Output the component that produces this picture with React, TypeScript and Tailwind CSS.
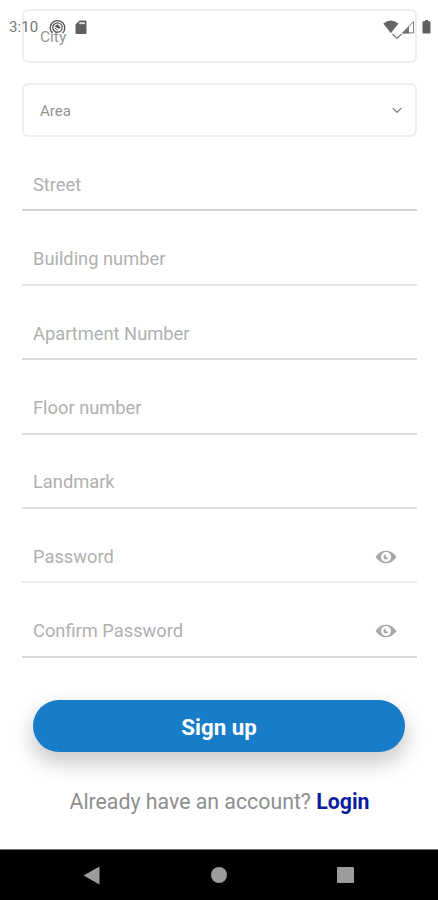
import React from 'react';

interface Field {
  label: string;
  line: string;
  secret?: boolean;
}

const fields: Field[] = [
  { label: 'Street', line: 'border-[#d3d3d3]' },
  { label: 'Building number', line: 'border-[#e4e4e4]' },
  { label: 'Apartment Number', line: 'border-[#dadada]' },
  { label: 'Floor number', line: 'border-[#dedede]' },
  { label: 'Landmark', line: 'border-[#e0e0e0]' },
  { label: 'Password', line: 'border-[#ebebeb]', secret: true },
  { label: 'Confirm Password', line: 'border-[#d8d8d8]', secret: true },
];

const EyeIcon = () => (
  <svg className="w-[22px] h-[14px]" viewBox="0 0 22 14">
    <path d="M0.5 7C3.5 2.6 7 .7 11 .7S18.500 2.600 21.500 7C18.500 11.400 15 13.300 11 13.300S3.500 11.400 .5 7Z" fill="#a8a8a8" />
    <circle cx="11" cy="7" r="5" fill="#fff" />
    <path d="M10.500 4.600A2.500 2.500 0 1 0 13.300 7.800L11 7.300Z" fill="#a8a8a8" />
  </svg>
);

const StatusBar = () => (
  <div className="absolute inset-x-0 top-0 h-[54px] flex items-center pl-[9px] pr-[7px]">
    <span className="text-[15px] leading-none text-[#757575] w-[40px] tracking-[0.1px]">3:10</span>
    <svg className="w-[17px] h-[17px] shrink-0" viewBox="0 0 17 17" fill="none" stroke="#555">
      <path d="M3.500 14.200A7.300 7.300 0 1 1 13.500 14.200" strokeWidth="1.300" />
      <circle cx="8.500" cy="8.500" r="4.700" strokeWidth="1.300" />
      <path d="M5.500 7.200 8.500 5.200 11.800 8.800 9.800 9.800Z" fill="#555" stroke="none" />
      <path d="M5.800 8.800 8.500 11.200" strokeWidth="1" />
    </svg>
    <svg className="w-3 h-[15px] ml-[9px] shrink-0" viewBox="0 0 12 15">
      <path d="M4.500 .5H10.500Q11.500 .5 11.500 1.500V13Q11.500 14 10.500 14H1.500Q.5 14 .5 13V4.500Z" fill="#5f5f5f" />
      <path d="M4.200 3.200H10" stroke="#d8d8d8" strokeWidth="2" />
    </svg>
    <div className="flex-1" />
    <svg className="w-4 h-[14px] shrink-0" viewBox="0 0 16 14">
      <path d="M.3 3.600Q7.800-2.400 15.500 3.600L7.900 13.300Z" fill="#666" />
    </svg>
    <svg className="w-[14px] h-[14px] ml-[2px] shrink-0" viewBox="0 0 14 14">
      <path d="M1.600 12.900 12.600 1.600V12.900Z" fill="none" stroke="#777" />
      <path d="M1 13.400 8 6.200V13.400Z" fill="#707070" />
    </svg>
    <svg className="w-[9px] h-[14px] ml-[7px] shrink-0" viewBox="0 0 9 14">
      <path d="M3 0H6V1.300H7.500Q8.500 1.300 8.500 2.300V12.500Q8.500 13.500 7.500 13.500H1.500Q.5 13.500 .5 12.500V2.300Q.5 1.300 1.500 1.300H3Z" fill="#5f5f5f" />
    </svg>
  </div>
);

const SelectBox = ({ children }: { children: React.ReactNode }) => (
  <div className="h-[54px] shrink-0 border-2 border-[#efefef] rounded-[6px] flex items-center justify-between pl-4 pr-3">
    {children}
  </div>
);

const App: React.FC = () => {
  return (
    <div className="relative w-[438px] h-[900px] bg-white overflow-hidden flex flex-col font-['Roboto',sans-serif]">
      <main className="flex-1 flex flex-col pl-[22px] pr-[21px] pt-[9px]">
        <div className="flex flex-col gap-5">
          <SelectBox>
            <span className="pt-[3px] text-[15.500px] leading-none text-[#949494]">City</span>
            <svg className="w-[12px] h-[8px]" viewBox="0 0 12 8" fill="none" stroke="#777" strokeWidth="1.200">
              <path d="M1.500 2 6 6.500 10.500 2" />
            </svg>
          </SelectBox>
          <SelectBox>
            <span className="pt-[2px] text-[15px] leading-none text-[#949494]">Area</span>
            <svg className="w-[12px] h-[8px]" viewBox="0 0 12 8" fill="none" stroke="#777" strokeWidth="1.200">
              <path d="M1.800 2.200 6 6.400 10.200 2.200" />
            </svg>
          </SelectBox>
        </div>

        <div className="flex flex-col">
          {fields.map(({ label, line, secret }) => (
            <div key={label} className={`h-[74.4px] border-b-2 ${line} flex items-end justify-between pl-[11px] pr-5 pb-[12.6px]`}>
              <span className="text-[18.300px] leading-6 text-[#b0b0b0]">{label}</span>
              {secret && (
                <span className="h-6 flex items-center">
                  <EyeIcon />
                </span>
              )}
            </div>
          ))}
        </div>

        <button className="mt-[42px] ml-[11px] mr-3 h-[52px] shrink-0 rounded-full pt-[3px] bg-[#177dc9] text-white text-[22.300px] leading-none font-bold shadow-[0_10px_20px_2px_rgba(0,0,0,0.2)]">
          Sign up
        </button>
        <p className="mt-9 text-center text-[21.300px] leading-7 text-[#8e8e8e] whitespace-nowrap">
          Already have an account? <a className="font-bold text-[#0b1d9e]">Login</a>
        </p>
      </main>

      <nav className="h-[51px] shrink-0 bg-black border-t border-[#777] flex items-center justify-between pl-[83px] pr-[84px]">
        <svg className="w-[17px] h-[19px]" viewBox="0 0 17 19">
          <path d="M.5 9.500 16.500 .5V18.500Z" fill="#9c9c9c" />
        </svg>
        <span className="w-4 h-4 rounded-full bg-[#9c9c9c]" />
        <span className="w-[17px] h-4 rounded-[1px] bg-[#9c9c9c]" />
      </nav>

      <StatusBar />
    </div>
  );
};

export default App;
